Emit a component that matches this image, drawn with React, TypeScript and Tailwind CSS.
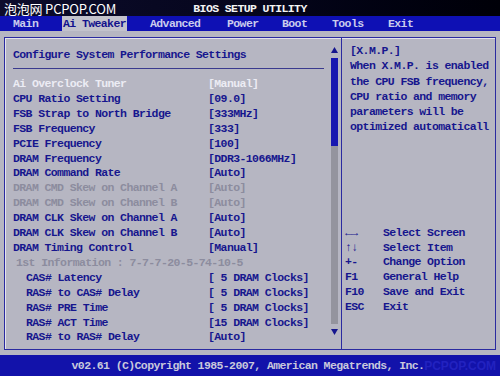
const rows: { label: string; value: string; tone: "sel" | "on" | "off"; indent: number }[] = [
  { label: "Ai Overclock Tuner", value: "[Manual]", tone: "sel", indent: 0 },
  { label: "CPU Ratio Setting", value: "[09.0]", tone: "on", indent: 0 },
  { label: "FSB Strap to North Bridge", value: "[333MHz]", tone: "on", indent: 0 },
  { label: "FSB Frequency", value: "[333]", tone: "on", indent: 0 },
  { label: "PCIE Frequency", value: "[100]", tone: "on", indent: 0 },
  { label: "DRAM Frequency", value: "[DDR3-1066MHz]", tone: "on", indent: 0 },
  { label: "DRAM Command Rate", value: "[Auto]", tone: "on", indent: 0 },
  { label: "DRAM CMD Skew on Channel A", value: "[Auto]", tone: "off", indent: 0 },
  { label: "DRAM CMD Skew on Channel B", value: "[Auto]", tone: "off", indent: 0 },
  { label: "DRAM CLK Skew on Channel A", value: "[Auto]", tone: "on", indent: 0 },
  { label: "DRAM CLK Skew on Channel B", value: "[Auto]", tone: "on", indent: 0 },
  { label: "DRAM Timing Control", value: "[Manual]", tone: "on", indent: 0 },
  { label: "1st Information : 7-7-7-20-5-74-10-5", value: "", tone: "off", indent: 1 },
  { label: "CAS# Latency", value: "[ 5 DRAM Clocks]", tone: "on", indent: 2 },
  { label: "RAS# to CAS# Delay", value: "[ 5 DRAM Clocks]", tone: "on", indent: 2 },
  { label: "RAS# PRE Time", value: "[ 5 DRAM Clocks]", tone: "on", indent: 2 },
  { label: "RAS# ACT Time", value: "[15 DRAM Clocks]", tone: "on", indent: 2 },
  { label: "RAS# to RAS# Delay", value: "[Auto]", tone: "on", indent: 2 },
];

const help = [
  "[X.M.P.]",
  "When X.M.P. is enabled",
  "the CPU FSB frequency,",
  "CPU ratio and memory",
  "parameters will be",
  "optimized automaticall",
];

const keys = [
  ["←→", "Select Screen"],
  ["↑↓", "Select Item"],
  ["+-", "Change Option"],
  ["F1", "General Help"],
  ["F10", "Save and Exit"],
  ["ESC", "Exit"],
];

const tones = {
  sel: "text-[#ececf4]",
  on: "text-[#16168e]",
  off: "text-[#8c8c9e]",
};

const indents = ["pl-0", "pl-[3px]", "pl-[13px]"];

const App = () => {
  return (
    <div className="relative flex flex-col w-[500px] h-[376px] overflow-hidden bg-[#b6b6c2] font-['Liberation_Mono',monospace] font-bold text-[11.5px] tracking-[-0.6px]">
      {/* title */}
      <div className="relative flex h-[16px] items-center justify-center bg-gradient-to-r from-[#0c0c2c] via-[#06061c] to-[#000008] text-[#f4f4f4] leading-none">
        <span className="pt-[1px]">BIOS SETUP UTILITY</span>
      </div>

      {/* menu */}
      <div className="flex h-[15px] items-center bg-[#0e10b4] text-[#cacced] leading-[15px] pl-[13px]">
        <span className="w-[49px]">Main</span>
        <span className="w-[88px]">
          <span className="inline-block bg-[#c2c2cc] text-[#12128c] pl-[1px] pr-[1px]">Ai Tweaker</span>
        </span>
        <span className="w-[77px]">Advanced</span>
        <span className="w-[55px]">Power</span>
        <span className="w-[50px]">Boot</span>
        <span className="w-[56px]">Tools</span>
        <span>Exit</span>
      </div>

      {/* watermark over title */}
      <div className="absolute z-10 left-[4px] top-[2px] font-['Noto_Sans_CJK_SC','Noto_Sans',sans-serif] font-normal text-[13px] tracking-[-0.2px] leading-[14px] text-white">
        泡泡网 PCPOP.COM
      </div>

      {/* main box */}
      <div className="flex flex-1 px-[4px] pt-[6px] pb-[5px]">
        <div className="flex flex-1 border border-[#2a2aa0] shadow-[inset_1px_1px_0_#e4e4ec]">
          {/* left */}
          <div className="flex w-[336px]">
            <div className="flex flex-col flex-1 pl-[8px] pt-[9px] text-[#16168e]">
              <div className="leading-[15px]">Configure System Performance Settings</div>
              <div className="mt-[6px] mr-[7px] h-px bg-[#3a3a8e]" />
              <div className="mt-[8px] flex flex-col">
                {rows.map((r) => (
                  <div key={r.label} className={`grid grid-cols-[195px_1fr] leading-[14.9px] whitespace-nowrap ${tones[r.tone]}`}>
                    <span className={indents[r.indent]}>{r.label}</span>
                    <span>{r.value}</span>
                  </div>
                ))}
              </div>
            </div>
            {/* scrollbar */}
            <div className="flex flex-col items-center w-[7px] mr-[3px] pt-[9px]">
              <svg width="7" height="6" viewBox="0 0 7 6">
                <path d="M3.5 0 L7 6 L0 6 Z" fill="#16168e" />
              </svg>
              <div className="mt-[5px] w-[7px] h-[88px] bg-[#1616b0]" />
              <div className="w-[7px] h-[178px] bg-[#94949e]" />
              <svg className="mt-[5px]" width="7" height="6" viewBox="0 0 7 6">
                <path d="M0 0 L7 0 L3.5 6 Z" fill="#16168e" />
              </svg>
            </div>
          </div>

          {/* right */}
          <div className="flex flex-col flex-1 border-l border-[#2a2aa0] text-[#16168e] pt-[5px]">
            <div className="pl-[8px] leading-[15.3px] whitespace-nowrap">
              {help.map((h) => (
                <div key={h}>{h}</div>
              ))}
            </div>
            <div className="mt-[91px] pl-[3px] leading-[14.8px]">
              {keys.map(([k, d]) => (
                <div key={d} className="flex">
                  <span className="w-[38px]">{k}</span>
                  <span>{d}</span>
                </div>
              ))}
            </div>
          </div>
        </div>
      </div>

      {/* footer */}
      <div className="relative flex h-[21px] items-center justify-center bg-[#1212aa] text-[#c8c8dc] leading-none">
        <span className="pr-[4px]">v02.61 (C)Copyright 1985-2007, American Megatrends, Inc.</span>
        <span className="absolute right-[4px] top-[5px] font-['Liberation_Sans',sans-serif] font-bold text-[12px] tracking-[0px] text-[#2222c0]">
          PCPOP.COM
        </span>
      </div>
    </div>
  );
};

export default App;
